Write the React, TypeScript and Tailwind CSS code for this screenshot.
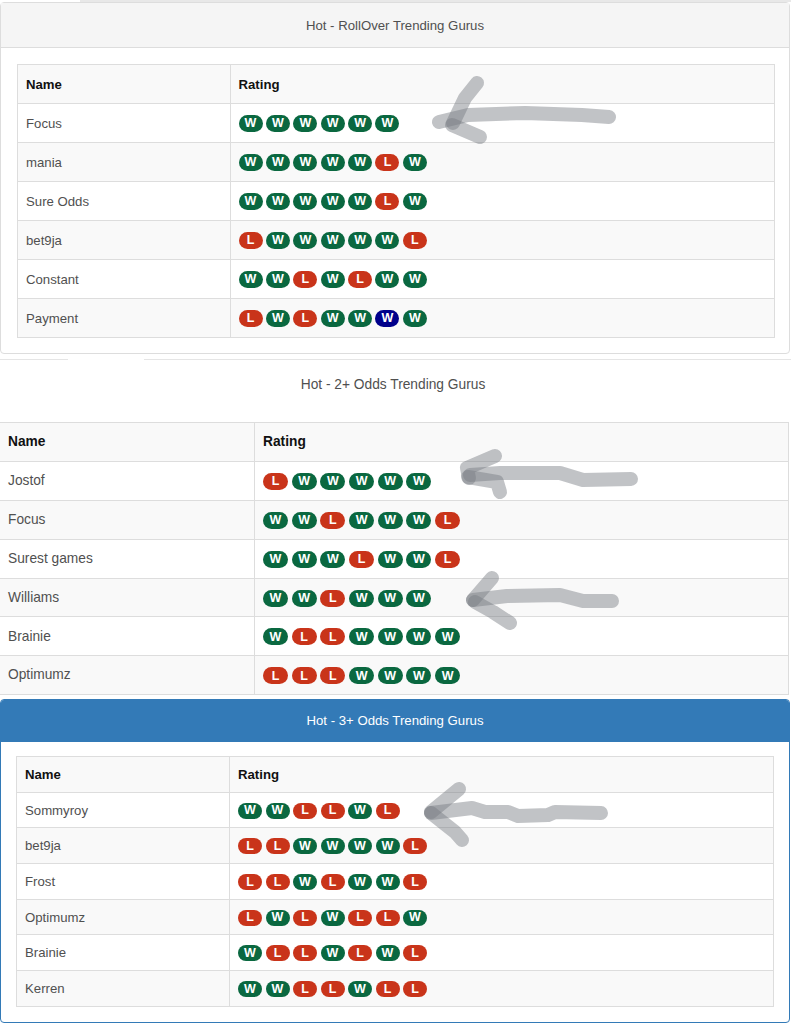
const W = "W", L = "L", B = "B";

type Row = [string, string[]];

const panel1: Row[] = [
  ["Focus", [W, W, W, W, W, W]],
  ["mania", [W, W, W, W, W, L, W]],
  ["Sure Odds", [W, W, W, W, W, L, W]],
  ["bet9ja", [L, W, W, W, W, W, L]],
  ["Constant", [W, W, L, W, L, W, W]],
  ["Payment", [L, W, L, W, W, B, W]],
];
const panel2: Row[] = [
  ["Jostof", [L, W, W, W, W, W]],
  ["Focus", [W, W, L, W, W, W, L]],
  ["Surest games", [W, W, W, L, W, W, L]],
  ["Williams", [W, W, L, W, W, W]],
  ["Brainie", [W, L, L, W, W, W, W]],
  ["Optimumz", [L, L, L, W, W, W, W]],
];
const panel3: Row[] = [
  ["Sommyroy", [W, W, L, L, W, L]],
  ["bet9ja", [L, L, W, W, W, W, L]],
  ["Frost", [L, L, W, L, W, W, L]],
  ["Optimumz", [L, W, L, W, L, L, W]],
  ["Brainie", [W, L, L, W, L, W, L]],
  ["Kerren", [W, W, L, L, W, L, L]],
];

function Badge({ v, size }: { v: string; size: "a" | "b" | "c" }) {
  const colour = v === L ? "bg-[#c9341a]" : v === B ? "bg-[#00008b]" : "bg-[#0a6840]";
  const dims =
    size === "b"
      ? "w-[25px] h-[17px] mr-[3.7px]"
      : size === "a"
        ? "w-[24px] h-[17px] mr-[3.4px]"
        : "w-[24px] h-[16px] mr-[3.5px]";
  return (
    <span className={`${colour} ${dims} inline-flex items-center justify-center rounded-full text-white text-[12.5px] font-bold leading-none shrink-0`}>
      {v === B ? W : v}
    </span>
  );
}

function RatingTable({ rows, first, rowH, size, className }: { rows: Row[]; first: string; rowH: string; size: "a" | "b" | "c"; className: string }) {
  return (
    <div className={`border border-[#dddddd] border-b-0 ${className}`}>
      <div className={`flex ${rowH} bg-[#f9f9f9] border-b border-[#dddddd] font-bold text-[#111] items-stretch`}>
        <div className={`${first} px-2 pt-px flex items-center border-r border-[#dddddd] shrink-0`}>Name</div>
        <div className="px-2 pt-px flex items-center">Rating</div>
      </div>
      {rows.map(([name, badges], i) => (
        <div key={i} className={`flex ${rowH} border-b border-[#dddddd] items-stretch ${i % 2 ? "bg-[#f9f9f9]" : "bg-white"}`}>
          <div className={`${first} px-2 pt-px flex items-center border-r border-[#dddddd] shrink-0`}>{name}</div>
          <div className="px-2 pt-px flex items-center">
            {badges.map((b, j) => (
              <Badge key={j} v={b} size={size} />
            ))}
          </div>
        </div>
      ))}
    </div>
  );
}

function Arrow({ strokes }: { strokes: string[] }) {
  return (
    <g fill="none" stroke="#787d83" strokeOpacity="0.46" strokeWidth="14" strokeLinecap="round" strokeLinejoin="round">
      {strokes.map((d, i) => (
        <path key={i} d={d} />
      ))}
    </g>
  );
}

export default function App() {
  return (
    <div className="relative w-[791px] h-[1024px] overflow-hidden bg-white text-[13.2px] text-[#505050] font-['Liberation_Sans',Arial,sans-serif]">
      <div className="h-[2px] flex">
        <div className="w-[80px]" />
        <div className="flex-1 bg-[#e8e8e8]" />
      </div>
      <section className="w-[790px] h-[352px] border border-[#dddddd] rounded-[4px] bg-white">
        <div className="h-[45px] pt-px bg-[#f5f5f5] border-b border-[#dddddd] flex items-center justify-center">
          Hot - RollOver Trending Gurus
        </div>
        <RatingTable rows={panel1} first="w-[212.5px]" rowH="h-[39px]" size="a" className="mt-[16px] ml-[16px] mr-[14px]" />
      </section>

      <section className="mt-[5px] h-[340px]">
        <div className="h-px flex">
          <div className="w-[68px] bg-[#e5e5e5]" />
          <div className="w-[76px]" />
          <div className="flex-1 bg-[#e5e5e5]" />
        </div>
        <div className="h-[62px] pt-[15px] pr-[5px] text-center text-[13.75px] leading-[20px]">
          Hot - 2+ Odds Trending Gurus
        </div>
        <RatingTable rows={panel2} first="w-[255px]" rowH="h-[38.9px]" size="b" className="w-[789px] text-[13.75px] border-l-0" />
      </section>

      <section className="w-[790px] h-[324px] border border-[#337ab7] rounded-[4px] bg-white">
        <div className="h-[42px] bg-[#337ab7] flex items-center justify-center text-white rounded-t-[3px]">
          Hot - 3+ Odds Trending Gurus
        </div>
        <RatingTable rows={panel3} first="w-[213px]" rowH="h-[35.7px]" size="c" className="mt-[14px] ml-[15px] mr-[15px]" />
      </section>

      <svg className="absolute left-0 top-0 pointer-events-none" width="791" height="1024">
        <Arrow
          strokes={[
            "M439 122 L468 115 L525 113 L582 115 L609 117",
            "M477 83 L465 98 L453 123",
            "M452 125 L480 137",
          ]}
        />
        <Arrow
          strokes={[
            "M470 475 L500 473 L560 473 L583 480 L631 479",
            "M495 456 L467 468 L469 478",
            "M468 477 L497 482 L500 492",
          ]}
        />
        <Arrow
          strokes={[
            "M473 600 L507 596 L560 595 L583 601 L612 601",
            "M492 578 L473 600",
            "M475 602 L493 612 L510 623",
          ]}
        />
        <Arrow
          strokes={[
            "M431 813 L472 808 L485 812 L508 812 L518 816 L548 815 L555 812 L601 813",
            "M459 789 L431 812",
            "M431 813 L455 832 L462 840",
          ]}
        />
      </svg>
    </div>
  );
}
